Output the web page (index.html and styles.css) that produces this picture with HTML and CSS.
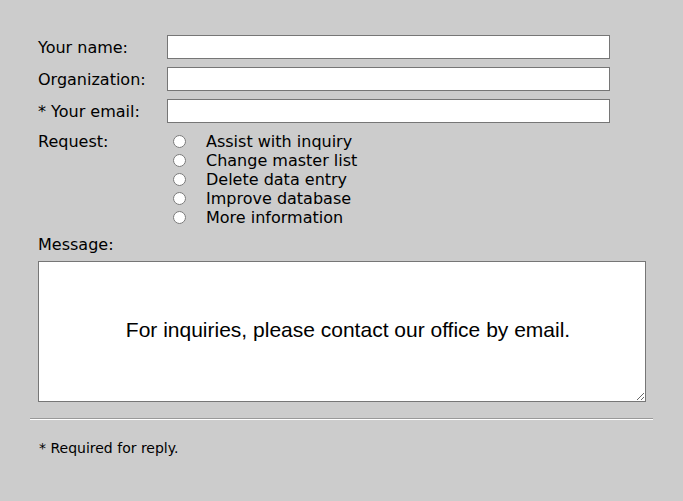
FILE: index.html
```html
<!DOCTYPE html>
<html>
<head>
<meta name="viewport" content="width=device-width, initial-scale=1.0">
<title>Contact</title>
<link rel="stylesheet" href="styles.css">
</head>
<body>

<div class="page">
  <form id="contact" class="form">
    <div class="row">
      <label for="name">Your name:</label>
      <input type="text" id="name" name="name">
    </div>
    <div class="row">
      <label for="org">Organization:</label>
      <input type="text" id="org" name="org">
    </div>
    <div class="row">
      <label for="email">* Your email:</label>
      <input type="text" id="email" name="email">
    </div>
    <div class="row request">
      <label>Request:</label>
      <div class="choices">
        <div class="choice"><input type="radio" name="req" id="r1"><label for="r1">Assist with inquiry</label></div>
        <div class="choice"><input type="radio" name="req" id="r2"><label for="r2">Change master list</label></div>
        <div class="choice"><input type="radio" name="req" id="r3"><label for="r3">Delete data entry</label></div>
        <div class="choice"><input type="radio" name="req" id="r4"><label for="r4">Improve database</label></div>
        <div class="choice"><input type="radio" name="req" id="r5"><label for="r5">More information</label></div>
      </div>
    </div>
    <div class="msg-label"><label for="message">Message:</label></div>
    <textarea id="message" name="message">For inquiries, please contact our office by email.</textarea>
  </form>
  <hr class="rule">
  <p class="note">* Required for reply.</p>
</div>

</body>
</html>
```

FILE: styles.css
```css
body {
  margin: 0;
  background-color: #cccccc;
  font-family: "DejaVu Sans", Verdana, sans-serif;
  font-size: 16px;
  color: #000;
}

.page {
  padding: 35px 30px 20px 30px;
}

.form {
  padding: 0 7px 0 8px;
}

.row {
  display: flex;
  align-items: center;
  margin-bottom: 8px;
}

.row > label {
  width: 129px;
  flex: none;
}

input[type=text] {
  width: 443px;
  height: 24px;
  box-sizing: border-box;
  border: 1px solid #767676;
  margin: 0;
  padding: 2px 4px;
  background: #fff;
}

.request {
  align-items: flex-start;
  margin-top: 9px;
  margin-bottom: 0;
}

.request > label {
  line-height: 19px;
}

.choice {
  display: flex;
  align-items: center;
  height: 19px;
}

input[type=radio] {
  width: 13px;
  height: 13px;
  margin: 0 20px 0 6px;
}

.msg-label {
  height: 19px;
  line-height: 19px;
  margin-top: 8px;
  margin-bottom: 7px;
}

textarea {
  display: block;
  width: 608px;
  height: 141px;
  box-sizing: border-box;
  margin: 0;
  border: 1px solid #767676;
  background: #fff;
  font-family: "Liberation Sans", Arial, sans-serif;
  font-size: 21px;
  text-align: center;
  padding: 56px 8px 0 20px;
  resize: vertical;
}

.rule {
  margin: 16px 0 0 0;
  border: none;
  border-top: 1px solid #999999;
  border-bottom: 1px solid #ffffff;
  height: 0;
}

.note {
  margin: 20px 0 0 9px;
  font-size: 14px;
}
```
